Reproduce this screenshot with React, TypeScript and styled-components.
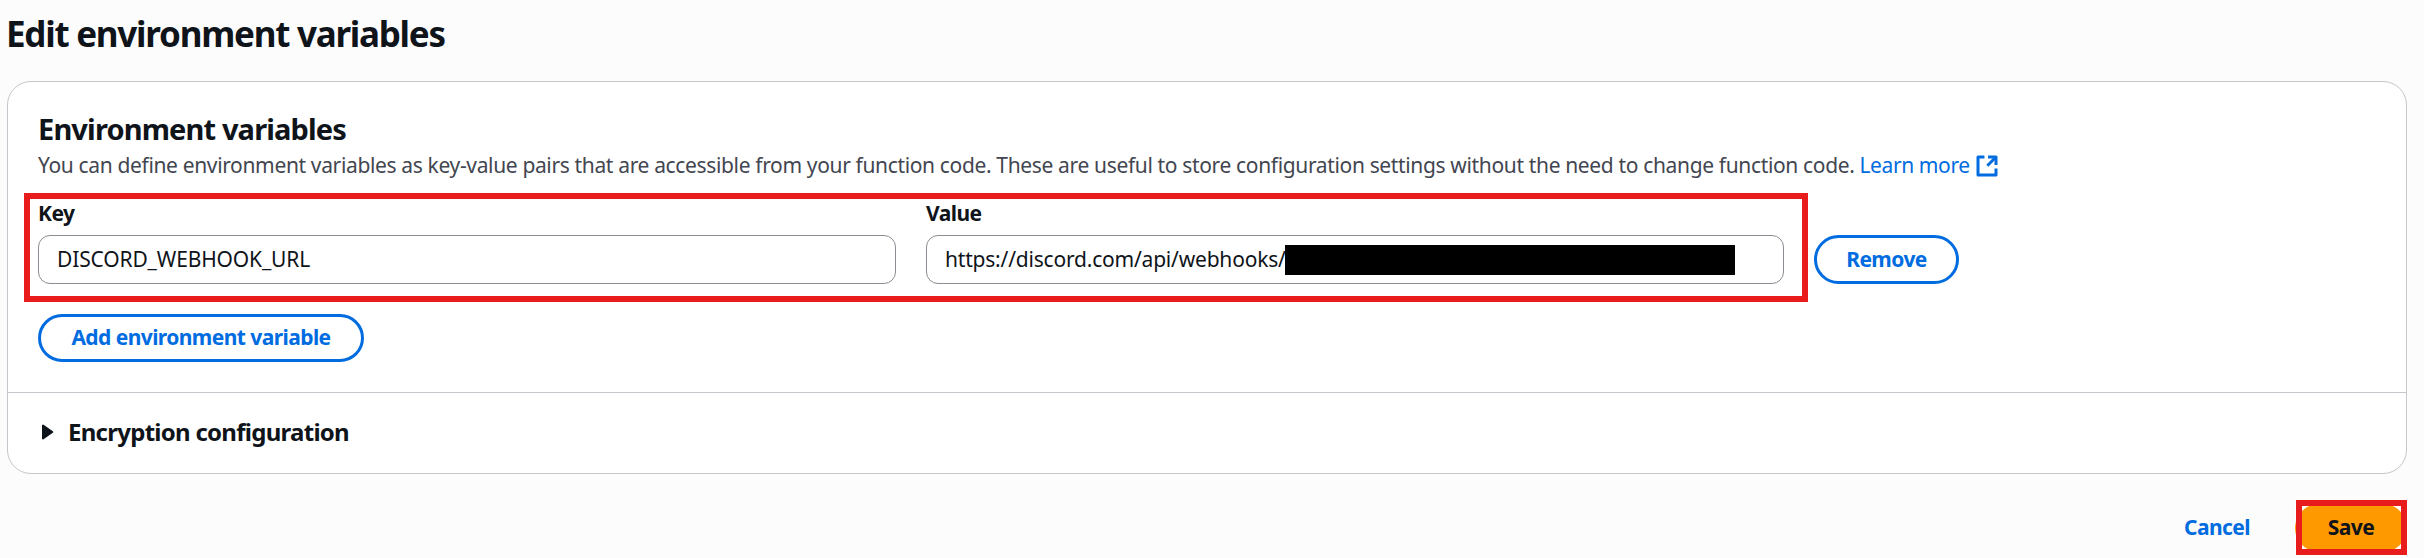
import React from 'react';
import styled, { createGlobalStyle } from 'styled-components';

const color = {
  text: '#0f141a',
  secondary: '#424650',
  link: '#006ce0',
  primary: '#ff9900',
  border: '#c6c6cd',
  inputBorder: '#8c8c94',
  highlight: '#e81c1c',
};

const GlobalStyle = createGlobalStyle`
  *, *::before, *::after { box-sizing: border-box; }
  body {
    margin: 0;
    background: #fcfcfd;
    color: ${color.text};
    font-family: 'Noto Sans', 'Open Sans', sans-serif;
    font-size: 21px;
    overflow: hidden;
  }
`;

const Page = styled.main`
  display: flex;
  flex-direction: column;
  height: 558px;
  padding: 11px 17px 0 7px;
`;

const PageTitle = styled.h1`
  margin: 0 0 25px -1px;
  font-size: 35px;
  font-weight: 700;
  line-height: 45px;
  letter-spacing: -1.25px;
`;

const Card = styled.section`
  display: flex;
  flex-direction: column;
  border: 1px solid ${color.border};
  border-radius: 24px;
  background: #fff;
`;

const CardBody = styled.div`
  display: flex;
  flex-direction: column;
  align-items: flex-start;
  height: 310px;
  padding: 29px 30px 0;
`;

const SectionTitle = styled.h2`
  margin: 0 0 3px;
  font-size: 29px;
  font-weight: 700;
  line-height: 36px;
  letter-spacing: -0.86px;
`;

const Description = styled.p`
  display: flex;
  align-items: center;
  margin: 0 0 19px;
  line-height: 30px;
  letter-spacing: -0.35px;
  color: ${color.secondary};
  white-space: nowrap;
`;

const LearnMore = styled.a`
  display: flex;
  align-items: center;
  gap: 5px;
  margin-left: 5px;
  color: ${color.link};
  letter-spacing: -0.4px;
`;

const ExternalSvg = styled.svg`
  width: 24px;
  height: 24px;
  margin-top: 2px;
  fill: none;
  stroke: currentColor;
  stroke-width: 2;
  stroke-linejoin: round;
`;

const VariableRow = styled.div`
  position: relative;
  display: flex;
  align-items: flex-end;
  gap: 30px;
  margin-bottom: 30px;
`;

const RowHighlight = styled.span`
  position: absolute;
  top: -6px;
  left: -14px;
  width: 1784px;
  height: 109px;
  border: 6px solid ${color.highlight};
  pointer-events: none;
`;

const Field = styled.div`
  display: flex;
  flex-direction: column;
  gap: 8px;
  width: 858px;
`;

const Label = styled.span`
  font-weight: 700;
  line-height: 28px;
  letter-spacing: -0.55px;
`;

const InputBox = styled.div`
  display: flex;
  align-items: center;
  height: 49px;
  padding: 0 18px;
  border: 1px solid ${color.inputBorder};
  border-radius: 12px;
  background: #fff;
`;

const InputText = styled.span<{ $width?: number; $spacing: number }>`
  width: ${p => (p.$width ? `${p.$width}px` : 'auto')};
  padding-bottom: 2px;
  letter-spacing: ${p => p.$spacing}px;
  white-space: nowrap;
`;

const Redaction = styled.span`
  width: 450px;
  height: 30px;
  background: #000;
`;

const Button = styled.button<{ $variant: 'normal' | 'link' | 'primary'; $width: number; $height?: number }>`
  display: flex;
  align-items: center;
  justify-content: center;
  width: ${p => p.$width}px;
  height: ${p => p.$height ?? 48}px;
  padding: 0 0 2px;
  border: ${p => (p.$variant === 'normal' ? `3px solid ${color.link}` : 'none')};
  border-radius: 30px;
  background: ${p => (p.$variant === 'primary' ? color.primary : p.$variant === 'normal' ? '#fff' : 'transparent')};
  color: ${p => (p.$variant === 'primary' ? color.text : color.link)};
  font: inherit;
  font-weight: 700;
  letter-spacing: -0.57px;
  white-space: nowrap;
`;

const ExpandHeader = styled.div`
  display: flex;
  align-items: center;
  gap: 14px;
  height: 81px;
  padding: 0 33px 3px;
  border-top: 1px solid ${color.border};
`;

const Caret = styled.svg`
  width: 13px;
  height: 16px;
  fill: ${color.text};
  stroke: ${color.text};
  stroke-width: 2;
  stroke-linejoin: round;
`;

const ExpandTitle = styled.h3`
  margin: 0;
  font-size: 24px;
  font-weight: 700;
  letter-spacing: -0.73px;
`;

const Actions = styled.div`
  display: flex;
  justify-content: flex-end;
  gap: 12px;
  margin-top: 30px;
`;

const SaveSlot = styled.div`
  position: relative;
  background: #fff;
`;

const SaveHighlight = styled.span`
  position: absolute;
  inset: -4px 0 -3px 1px;
  border: 6px solid ${color.highlight};
  pointer-events: none;
`;

const ExternalIcon = () => (
  <ExternalSvg viewBox="0 0 16 16" aria-hidden="true">
    <path d="M14 9.6V14H2V2h4.3" />
    <path d="M8.7 2H14v5.3" />
    <path d="M8.2 7.8 14 2" />
  </ExternalSvg>
);

export default function App() {
  return (
    <>
      <GlobalStyle />
      <Page>
        <PageTitle>Edit environment variables</PageTitle>
        <Card>
          <CardBody>
            <SectionTitle>Environment variables</SectionTitle>
            <Description>
              You can define environment variables as key-value pairs that are accessible from your function code. These
              are useful to store configuration settings without the need to change function code.
              <LearnMore>
                Learn more
                <ExternalIcon />
              </LearnMore>
            </Description>
            <VariableRow>
              <Field>
                <Label>Key</Label>
                <InputBox>
                  <InputText $spacing={-0.15}>DISCORD_WEBHOOK_URL</InputText>
                </InputBox>
              </Field>
              <Field>
                <Label>Value</Label>
                <InputBox>
                  <InputText $width={340} $spacing={-0.2}>https://discord.com/api/webhooks/</InputText>
                  <Redaction />
                </InputBox>
              </Field>
              <Button $variant="normal" $width={145} $height={49}>Remove</Button>
              <RowHighlight />
            </VariableRow>
            <Button $variant="normal" $width={326}>Add environment variable</Button>
          </CardBody>
          <ExpandHeader>
            <Caret viewBox="0 0 13 16" aria-hidden="true">
              <path d="M2 1.6v12.8l9.3-6.4z" />
            </Caret>
            <ExpandTitle>Encryption configuration</ExpandTitle>
          </ExpandHeader>
        </Card>
        <Actions>
          <Button $variant="link" $width={132}>Cancel</Button>
          <SaveSlot>
            <Button $variant="primary" $width={112}>Save</Button>
            <SaveHighlight />
          </SaveSlot>
        </Actions>
      </Page>
    </>
  );
}
